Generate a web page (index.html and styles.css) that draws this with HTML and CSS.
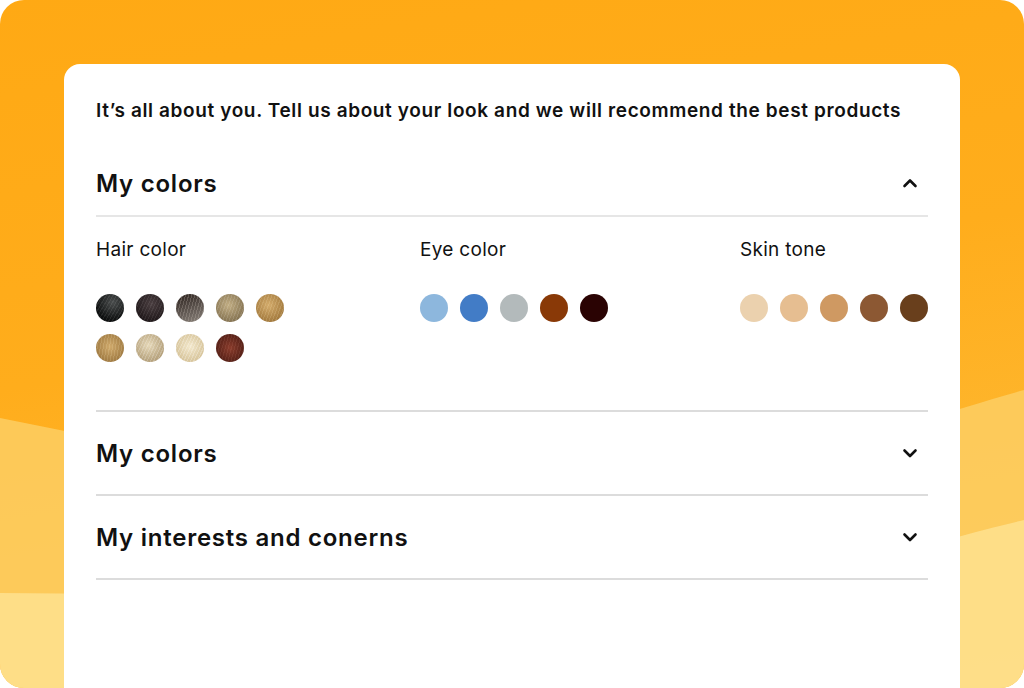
FILE: index.html
```html
<!DOCTYPE html>
<html lang="en">
<head>
    <meta charset="UTF-8">
    <meta name="viewport" content="width=device-width, initial-scale=1.0">
    <title>My profile</title>
    <link rel="stylesheet" href="styles.css">
</head>
<body>
    <div class="frame">
        <svg class="waves" width="1024" height="688" viewBox="0 0 1024 688" preserveAspectRatio="none">
            <path d="M0 418 C 300 480, 600 520, 760 470 C 860 440, 960 408, 1024 390 L1024 688 L0 688 Z" fill="#fdd067" opacity="0.8"/>
            <path d="M0 593 C 300 595, 700 600, 860 562 C 930 545, 980 530, 1024 520 L1024 688 L0 688 Z" fill="#fee292" opacity="0.8"/>
        </svg>

        <main class="card">
            <p class="intro">It’s all about you. Tell us about your look and we will recommend the best products</p>

            <section class="panel open">
                <div class="panel-head">
                    <h2>My colors</h2>
                    <svg class="chevron" width="24" height="24" viewBox="0 0 24 24"><path d="M6.5 15 L12 9.5 L17.5 15" fill="none" stroke="#111" stroke-width="2.6" stroke-linecap="round" stroke-linejoin="round"/></svg>
                </div>
                <div class="panel-body">
                    <div class="group">
                        <h3>Hair color</h3>
                        <div class="swatches">
                            <span class="dot hair h1"></span>
                            <span class="dot hair h2"></span>
                            <span class="dot hair h3"></span>
                            <span class="dot hair h4"></span>
                            <span class="dot hair h5"></span>
                            <span class="dot hair h6"></span>
                            <span class="dot hair h7"></span>
                            <span class="dot hair h8"></span>
                            <span class="dot hair h9"></span>
                        </div>
                    </div>
                    <div class="group">
                        <h3>Eye color</h3>
                        <div class="swatches">
                            <span class="dot" style="background:#8db7dd"></span>
                            <span class="dot" style="background:#427cc6"></span>
                            <span class="dot" style="background:#b3babb"></span>
                            <span class="dot" style="background:#893907"></span>
                            <span class="dot" style="background:#2a0303"></span>
                        </div>
                    </div>
                    <div class="group">
                        <h3>Skin tone</h3>
                        <div class="swatches">
                            <span class="dot" style="background:#ebd1ae"></span>
                            <span class="dot" style="background:#e6be91"></span>
                            <span class="dot" style="background:#cf9962"></span>
                            <span class="dot" style="background:#8c5833"></span>
                            <span class="dot" style="background:#693f1c"></span>
                        </div>
                    </div>
                </div>
            </section>

            <section class="panel">
                <div class="panel-head">
                    <h2>My colors</h2>
                    <svg class="chevron" width="24" height="24" viewBox="0 0 24 24"><path d="M6.5 9.5 L12 15 L17.5 9.5" fill="none" stroke="#111" stroke-width="2.6" stroke-linecap="round" stroke-linejoin="round"/></svg>
                </div>
            </section>

            <section class="panel">
                <div class="panel-head">
                    <h2>My interests and conerns</h2>
                    <svg class="chevron" width="24" height="24" viewBox="0 0 24 24"><path d="M6.5 9.5 L12 15 L17.5 9.5" fill="none" stroke="#111" stroke-width="2.6" stroke-linecap="round" stroke-linejoin="round"/></svg>
                </div>
            </section>
        </main>
    </div>
</body>
</html>
```

FILE: styles.css
```css
* {
    margin: 0;
    padding: 0;
    box-sizing: border-box;
}

body {
    font-family: Inter, 'Open Sans', 'Liberation Sans', sans-serif;
    background: #fff;
    color: #111;
}

.frame {
    position: relative;
    width: 1024px;
    height: 688px;
    border-radius: 24px;
    overflow: hidden;
    padding: 64px 64px 0;
    background: linear-gradient(170deg, #ffa914 0%, #ffad1c 45%, #fdbf3e 100%);
}

.waves {
    position: absolute;
    left: 0;
    top: 0;
}

.card {
    position: relative;
    height: 100%;
    background: #fff;
    border-radius: 16px 16px 0 0;
    padding: 33px 32px 0;
}

.intro {
    font-size: 19px;
    line-height: 28px;
    font-weight: 600;
    letter-spacing: 0.62px;
    margin-bottom: 26px;
}

.panel {
    border-bottom: 2px solid #dcdcdc;
}

.panel.open .panel-head {
    height: 66px;
    border-bottom: 2px solid #e6e6e6;
}

.panel-head {
    height: 82px;
    display: flex;
    align-items: center;
    justify-content: space-between;
}

.panel-head h2 {
    font-size: 24px;
    font-weight: 600;
    letter-spacing: 0.75px;
}

.chevron {
    margin-right: 6px;
}

.panel-body {
    display: grid;
    grid-template-columns: 324px 320px 188px;
    padding: 21px 0 48px;
}

.group h3 {
    font-size: 19px;
    line-height: 24px;
    font-weight: 400;
    letter-spacing: 0.3px;
    margin-bottom: 32px;
}

.swatches {
    display: flex;
    flex-wrap: wrap;
    gap: 12px;
    width: 188px;
}

.dot {
    width: 28px;
    height: 28px;
    border-radius: 50%;
}

.h1 { background: repeating-linear-gradient(120deg, rgba(255,255,255,0.08) 0 1px, transparent 1px 3px), radial-gradient(circle at 60% 30%, #4a4d4d, #0d0f0f 70%); }
.h2 { background: repeating-linear-gradient(115deg, rgba(255,255,255,0.07) 0 1px, transparent 1px 3px), radial-gradient(circle at 55% 35%, #4a3e40, #1f1719 75%); }
.h3 { background: repeating-linear-gradient(105deg, rgba(200,190,180,0.25) 0 1px, transparent 1px 3px), linear-gradient(160deg, #2a201c, #6e6660 70%, #8a827a); }
.h4 { background: repeating-linear-gradient(110deg, rgba(255,255,255,0.12) 0 1px, transparent 1px 3px), radial-gradient(circle at 45% 40%, #c2ae84, #7b6a4a 85%); }
.h5 { background: repeating-linear-gradient(110deg, rgba(255,240,200,0.15) 0 1px, transparent 1px 3px), radial-gradient(circle at 45% 40%, #d4ac6c, #9a7136 85%); }
.h6 { background: repeating-linear-gradient(100deg, rgba(255,240,200,0.15) 0 1px, transparent 1px 3px), radial-gradient(circle at 50% 45%, #d0aa6c, #98733c 85%); }
.h7 { background: repeating-linear-gradient(115deg, rgba(255,255,255,0.2) 0 1px, transparent 1px 3px), radial-gradient(circle at 45% 40%, #e6d8b8, #ab9670 85%); }
.h8 { background: repeating-linear-gradient(115deg, rgba(255,255,255,0.25) 0 1px, transparent 1px 3px), radial-gradient(circle at 50% 45%, #f3e8cc, #d2be92 85%); }
.h9 { background: repeating-linear-gradient(105deg, rgba(255,200,180,0.08) 0 1px, transparent 1px 3px), radial-gradient(circle at 50% 50%, #8a3c2c, #4d1c14 85%); }
```
